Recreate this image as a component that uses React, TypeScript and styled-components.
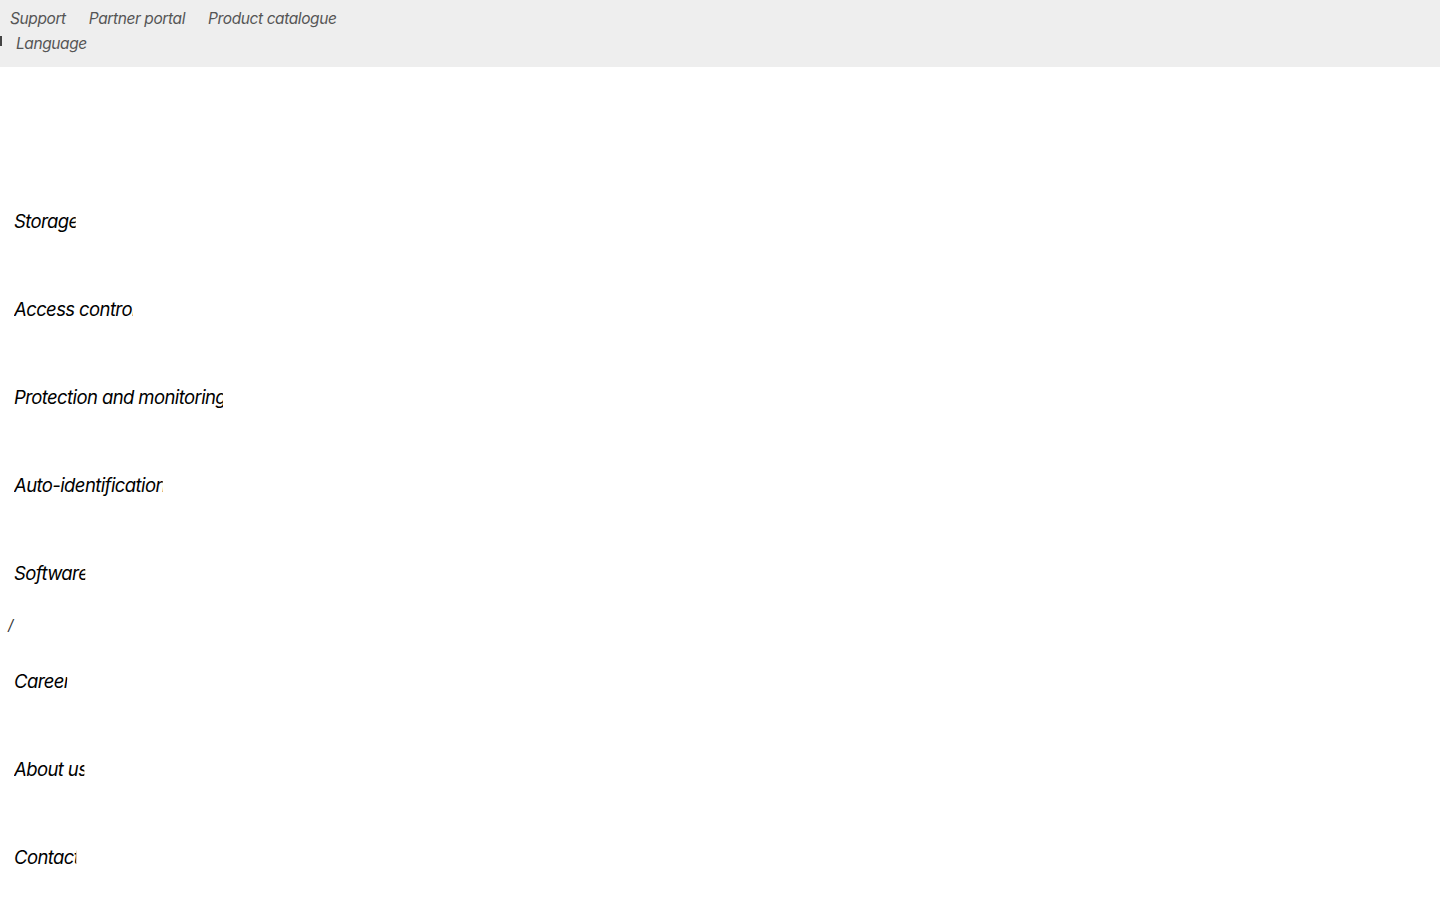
import React from "react";
import styled, { createGlobalStyle } from "styled-components";

const GlobalStyle = createGlobalStyle`
  body {
    margin: 0;
    background: #ffffff;
    font-family: Inter, "Noto Sans", sans-serif;
  }
`;

/* ---------------------------------------- */
/* Top bar */
/* ---------------------------------------- */
const TopBar = styled.header`
  background: #eeeeee;
  height: 67px;
  box-sizing: border-box;
  padding-top: 7px;
`;

const TopRow = styled.div`
  display: flex;
  align-items: center;
  gap: 23px;
  padding-left: 10px;
  height: 22px;
`;

const TopLink = styled.a`
  font-size: 15.5px;
  font-style: italic;
  color: #555555;
  letter-spacing: -0.4px;
  text-decoration: none;
`;

const LangRow = styled.div`
  display: flex;
  align-items: center;
  height: 26px;
  margin-top: 1px;
`;

const LangMark = styled.span`
  width: 2px;
  height: 10px;
  background: #444444;
  margin-right: 14px;
  margin-top: -4px;
`;

/* ---------------------------------------- */
/* Main nav */
/* ---------------------------------------- */
const MainNav = styled.nav`
  display: flex;
  flex-direction: column;
  padding-top: 110px;
`;

const NavItem = styled.a`
  display: flex;
  align-items: center;
  height: 88px;
  padding-left: 14px;
  text-decoration: none;
`;

const NavText = styled.span<{ $cut: number }>`
  font-size: 18.5px;
  font-weight: 450;
  font-style: italic;
  color: #000000;
  letter-spacing: -0.6px;
  clip-path: inset(0 ${(p) => p.$cut}px 0 0);
`;

const Separator = styled.div`
  display: flex;
  align-items: center;
  box-sizing: border-box;
  height: 20px;
  padding: 0 0 6px 8px;
  font-size: 15px;
  font-style: italic;
  color: #333333;
`;

const primary = [
  "Storage",
  "Access control",
  "Protection and monitoring",
  "Auto-identification",
  "Software",
];

const secondary = ["Career", "About us", "Contact"];

export default function App() {
  return (
    <>
      <GlobalStyle />
      <TopBar>
        <TopRow>
          <TopLink href="#">Support</TopLink>
          <TopLink href="#">Partner portal</TopLink>
          <TopLink href="#">Product catalogue</TopLink>
        </TopRow>
        <LangRow>
          <LangMark />
          <TopLink href="#">Language</TopLink>
        </LangRow>
      </TopBar>
      <MainNav>
        {primary.map((label) => (
          <NavItem key={label} href="#">
            <NavText $cut={3}>{label}</NavText>
          </NavItem>
        ))}
        <Separator>/</Separator>
        {secondary.map((label) => (
          <NavItem key={label} href="#">
            <NavText $cut={3}>{label}</NavText>
          </NavItem>
        ))}
      </MainNav>
    </>
  );
}
